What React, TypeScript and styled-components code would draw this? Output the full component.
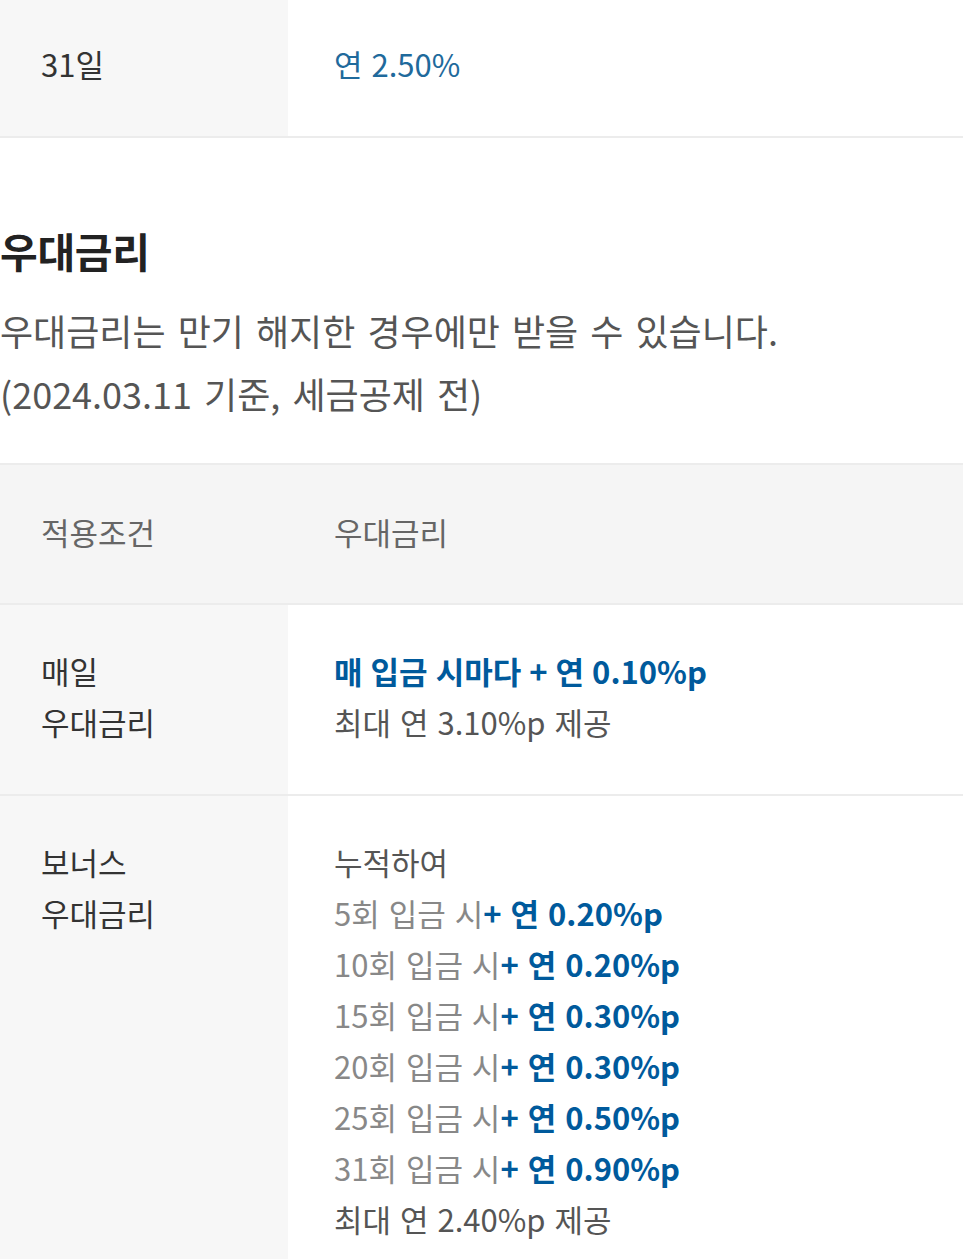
import styled, { createGlobalStyle } from 'styled-components'

const GlobalStyle = createGlobalStyle`
  html, body {
    margin: 0;
    padding: 0;
    background: #ffffff;
    font-family: 'Noto Sans CJK KR', 'Noto Sans', sans-serif;
  }
`;

const Page = styled.div`
  padding-right: 16px;
`;

const Table = styled.div<{ $top?: boolean }>`
  border-top: ${({ $top }) => ($top ? '2px solid #ececec' : 'none')};
`;

const Row = styled.div<{ $header?: boolean }>`
  display: grid;
  grid-template-columns: 288px 1fr;
  border-bottom: 2px solid #ececec;
  background: ${({ $header }) => ($header ? '#f5f5f5' : '#ffffff')};
`;

const Cell = styled.div<{ $label?: boolean; $muted?: boolean; $head?: boolean }>`
  padding: ${({ $head }) => ($head ? '41px 20px 46px 41px' : '40px 20px 47px 41px')};
  font-size: 31px;
  line-height: 51px;
  word-spacing: 1px;
  color: ${({ $muted }) => ($muted ? '#666666' : '#333333')};
  background: ${({ $label }) => ($label ? '#f7f7f7' : 'transparent')};
`;

const FirstCell = styled(Cell)`
  padding-top: 38px;
`;

const ValueCell = styled.div<{ $muted?: boolean; $head?: boolean }>`
  padding: ${({ $head }) => ($head ? '41px 20px 46px 46px' : '40px 20px 47px 46px')};
  font-size: 31px;
  line-height: 51px;
  word-spacing: 2px;
  color: ${({ $muted }) => ($muted ? '#666666' : '#555555')};
`;

const FirstValue = styled(ValueCell)`
  padding-top: 38px;
`;

const Rate = styled.span`
  color: #1f6a9c;
`;

const Strong = styled.span`
  display: block;
  color: #005a9c;
  font-weight: 700;
  word-spacing: 1px;
`;

const Line = styled.span<{ $light?: boolean }>`
  display: block;
  color: ${({ $light }) => ($light ? '#888888' : '#555555')};
`;

const Plus = styled.span`
  color: #005a9c;
  font-weight: 700;
`;

const Section = styled.section`
  padding-top: 87px;
`;

const Title = styled.h2`
  margin: 0;
  font-size: 41px;
  line-height: 50px;
  font-weight: 700;
  color: #222222;
  letter-spacing: -0.3px;
`;

const Desc = styled.p`
  margin: 24px 0 38px;
  font-size: 36px;
  line-height: 63px;
  color: #555555;
  word-spacing: 4px;
`;

const bonus = [
  ['5회', '0.20'],
  ['10회', '0.20'],
  ['15회', '0.30'],
  ['20회', '0.30'],
  ['25회', '0.50'],
  ['31회', '0.90'],
];

export default function App() {
  return (
    <Page>
      <GlobalStyle />
      <Table>
        <Row>
          <FirstCell $label>31일</FirstCell>
          <FirstValue>
            <Rate>연 2.50%</Rate>
          </FirstValue>
        </Row>
      </Table>

      <Section>
        <Title>우대금리</Title>
        <Desc>
          우대금리는 만기 해지한 경우에만 받을 수 있습니다.
          <br />
          (2024.03.11 기준, 세금공제 전)
        </Desc>
      </Section>

      <Table $top>
        <Row $header>
          <Cell $muted $head>적용조건</Cell>
          <ValueCell $muted $head>우대금리</ValueCell>
        </Row>
        <Row>
          <Cell $label>
            매일
            <br />
            우대금리
          </Cell>
          <ValueCell>
            <Strong>매 입금 시마다 + 연 0.10%p</Strong>
            <Line>최대 연 3.10%p 제공</Line>
          </ValueCell>
        </Row>
        <Row>
          <Cell $label>
            보너스
            <br />
            우대금리
          </Cell>
          <ValueCell>
            <Line>누적하여</Line>
            {bonus.map(([count, rate]) => (
              <Line $light key={count}>
                {count} 입금 시<Plus>+ 연 {rate}%p</Plus>
              </Line>
            ))}
            <Line>최대 연 2.40%p 제공</Line>
          </ValueCell>
        </Row>
      </Table>
    </Page>
  )
}
